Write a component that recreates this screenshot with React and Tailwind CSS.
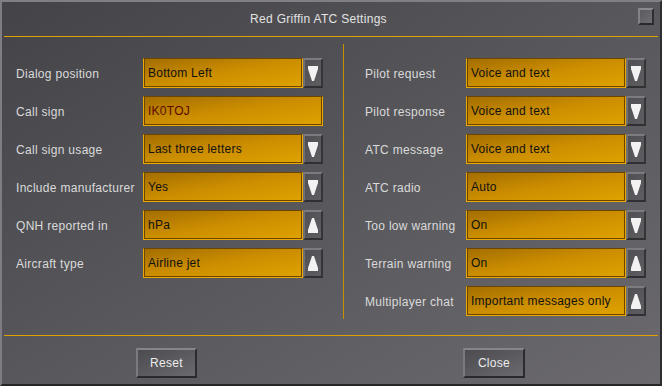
import React from "react";

const font = { fontFamily: '"Liberation Sans", Arial, sans-serif' };

function Arrow({ up }) {
  return (
    <div className="w-[20px] h-[30px] flex items-center justify-center border-2 border-t-[#7c7c80] border-l-[#707074] border-r-[#353537] border-b-[#303032] bg-linear-to-br from-[#505054] to-[#5e5e62]">
      <svg width="10" height="15" viewBox="0 0 10 15">
        {up ? (
          <polygon points="4,0 6,0 10,12 10,15 0,15 0,12" fill="#f2f2f2" />
        ) : (
          <polygon points="0,0 10,0 10,3 6,15 4,15 0,3" fill="#f2f2f2" />
        )}
      </svg>
    </div>
  );
}

function Field({ value, arrow, up, red }) {
  return (
    <div className="flex">
      <div
        className={
          "h-[30px] border border-[#eaa800] border-t-[#6a4600] " +
          (arrow ? "w-[160px]" : "w-[180px]")
        }
      >
        <div className="h-full border-x border-b border-[#6a4600] bg-linear-to-br from-[#a46e00] via-[#cc8e00] to-[#dea200] flex items-center pl-[3px] pt-px">
          <span
            className={
              "text-[12px] tracking-[0.25px] " +
              (red ? "text-[#5c0a00]" : "text-[#111]")
            }
          >
            {value}
          </span>
        </div>
      </div>
      {arrow && <Arrow up={up} />}
    </div>
  );
}

function Row({ label, value, arrow = true, up, red, labelW }) {
  return (
    <div className="flex items-center h-[30px]">
      <div
        className={
          "text-[12px] tracking-[0.3px] text-[#dadada] whitespace-nowrap pt-px " +
          labelW
        }
      >
        {label}
      </div>
      <Field value={value} arrow={arrow} up={up} red={red} />
    </div>
  );
}

function Button({ children, w }) {
  return (
    <div
      className={
        "h-[30px] flex items-center justify-center border-2 border-t-[#85858a] border-l-[#7a7a7e] border-r-[#2c2c2e] border-b-[#2a2a2c] bg-linear-to-br from-[#4c4c50] to-[#6a6a6e] text-[12px] tracking-[0.3px] text-[#ececec] " +
        w
      }
    >
      {children}
    </div>
  );
}

export default function App() {
  const left = [
    { label: "Dialog position", value: "Bottom Left" },
    { label: "Call sign", value: "IK0TOJ", arrow: false, red: true },
    { label: "Call sign usage", value: "Last three letters" },
    { label: "Include manufacturer", value: "Yes" },
    { label: "QNH reported in", value: "hPa", up: true },
    { label: "Aircraft type", value: "Airline jet", up: true },
  ];
  const right = [
    { label: "Pilot request", value: "Voice and text" },
    { label: "Pilot response", value: "Voice and text" },
    { label: "ATC message", value: "Voice and text" },
    { label: "ATC radio", value: "Auto" },
    { label: "Too low warning", value: "On" },
    { label: "Terrain warning", value: "On", up: true },
    { label: "Multiplayer chat", value: "Important messages only", up: true },
  ];
  return (
    <div style={font} className="w-[662px] h-[386px] overflow-hidden">
      <div className="w-full h-full flex flex-col border-2 border-t-[#808084] border-l-[#7e7e82] border-r-[#2e2e30] border-b-[#262628] bg-linear-to-br from-[#444448] via-[#58585c] to-[#6b696d]">
        {/* title bar */}
        <div className="h-[34px] flex items-start">
          <div className="flex-1 text-center text-[12px] tracking-[0.3px] text-[#e2e2e2] pt-[8px] pr-[3px]">
            Red Griffin ATC Settings
          </div>
          <div className="mt-[6px] mr-[6px] w-[16px] h-[17px] border-2 border-t-[#8a8a8e] border-l-[#828286] border-r-[#2e2e30] border-b-[#2a2a2c] bg-linear-to-br from-[#5c5c60] to-[#6e6e72]" />
        </div>
        <div className="mx-[2px] h-px bg-[#e0a000]" />
        {/* content */}
        <div className="h-[298px] flex">
          <div className="pl-[14px] pt-[21px] flex flex-col gap-[8px] w-[341px]">
            {left.map((r) => (
              <Row key={r.label} {...r} labelW="w-[127px]" />
            ))}
          </div>
          <div className="w-px bg-[#c89000] mt-[7px] mb-[16px]" />
          <div className="pl-[21px] pt-[21px] flex flex-col gap-[8px]">
            {right.map((r) => (
              <Row key={r.label} {...r} labelW="w-[101px]" />
            ))}
          </div>
        </div>
        <div className="mx-[2px] h-px bg-[#e0a000]" />
        {/* footer */}
        <div className="flex-1 flex items-start pt-[12px] pl-[134px] gap-[266px]">
          <Button w="w-[61px]">Reset</Button>
          <Button w="w-[62px]">Close</Button>
        </div>
      </div>
    </div>
  );
}
